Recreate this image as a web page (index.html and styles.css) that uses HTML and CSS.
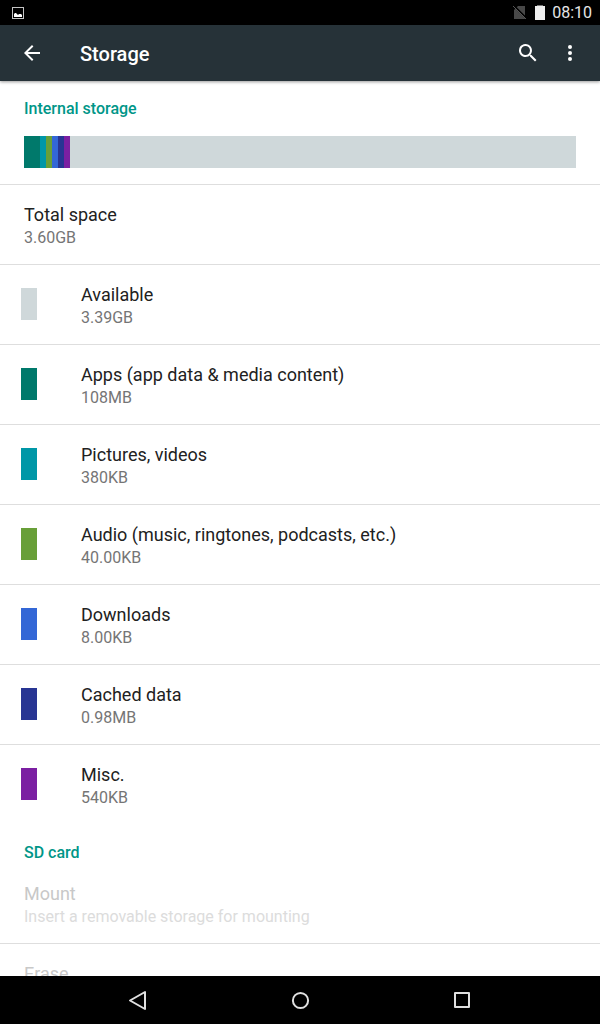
FILE: index.html
```html
<!DOCTYPE html>
<html lang="en">

<head>
    <title>Storage</title>
    <meta charset="UTF-8">
    <meta name="viewport" content="width=device-width, initial-scale=1.0">
    <link rel="stylesheet" href="styles.css">
</head>

<body>
    <div class="statusBar">
        <svg class="statusBar-picture" width="12" height="12" viewBox="0 0 12 12" aria-hidden="true">
            <rect x=".5" y=".5" width="11" height="11" fill="none" stroke="#c4c4c4" />
            <path d="M2 10V7l1-1h1l1 1 1 1 1-1h2l1 1v2z" fill="#fff" />
        </svg>
        <div class="statusBar-right">
            <svg width="15" height="14" viewBox="0 0 15 14" aria-hidden="true">
                <path d="M5 0h7v13H1V4z" fill="#484848" />
                <path d="M1 0l13 13" stroke="#000" stroke-width="2" />
                <path d="M0 0l13 13" stroke="#555" stroke-width="1" />
            </svg>
            <svg width="10" height="15" viewBox="0 0 10 15" aria-hidden="true">
                <path d="M0 1h10v14H0z" fill="#eee" />
                <path d="M2 0h6v1H2z" fill="#777" />
            </svg>
            <time datetime="08:10">08:10</time>
        </div>
    </div>
    <header class="appBar">
        <button class="iconButton" aria-label="Back">
            <svg width="24" height="24" viewBox="0 0 24 24">
                <path d="M20 11H7.800l5.600-5.600L12 4l-8 8 8 8 1.400-1.400L7.800 13H20z" fill="#fff" />
            </svg>
        </button>
        <h1 class="appBar-title">Storage</h1>
        <button class="iconButton" aria-label="Search">
            <svg width="24" height="24" viewBox="0 0 24 24">
                <path d="M15.500 14h-.8l-.3-.3a6.500 6.500 0 1 0-.7.7l.3.3v.8l5 5 1.500-1.500zm-6 0a4.500 4.500 0 1 1 0-9 4.500 4.500 0 0 1 0 9z" fill="#fff" />
            </svg>
        </button>
        <button class="iconButton iconButton-narrow" aria-label="More options">
            <svg width="24" height="24" viewBox="0 0 24 24" fill="#fff">
                <circle cx="12" cy="6" r="2" />
                <circle cx="12" cy="12" r="2" />
                <circle cx="12" cy="18" r="2" />
            </svg>
        </button>
    </header>
    <main class="content">
        <section>
            <h2 class="category">Internal storage</h2>
            <div class="usage">
                <div class="usage-bar">
                    <span class="usage-part apps"></span>
                    <span class="usage-part pictures"></span>
                    <span class="usage-part audio"></span>
                    <span class="usage-part downloads"></span>
                    <span class="usage-part cached"></span>
                    <span class="usage-part misc"></span>
                </div>
            </div>
            <ul class="items">
                <li class="item">
                    <div>
                        <h3 class="item-title">Total space</h3>
                        <p class="item-summary">3.60GB</p>
                    </div>
                </li>
                <li class="item item-colored">
                    <span class="swatch available"></span>
                    <div>
                        <h3 class="item-title">Available</h3>
                        <p class="item-summary">3.39GB</p>
                    </div>
                </li>
                <li class="item item-colored">
                    <span class="swatch apps"></span>
                    <div>
                        <h3 class="item-title">Apps (app data &amp; media content)</h3>
                        <p class="item-summary">108MB</p>
                    </div>
                </li>
                <li class="item item-colored">
                    <span class="swatch pictures"></span>
                    <div>
                        <h3 class="item-title">Pictures, videos</h3>
                        <p class="item-summary">380KB</p>
                    </div>
                </li>
                <li class="item item-colored">
                    <span class="swatch audio"></span>
                    <div>
                        <h3 class="item-title">Audio (music, ringtones, podcasts, etc.)</h3>
                        <p class="item-summary">40.00KB</p>
                    </div>
                </li>
                <li class="item item-colored">
                    <span class="swatch downloads"></span>
                    <div>
                        <h3 class="item-title">Downloads</h3>
                        <p class="item-summary">8.00KB</p>
                    </div>
                </li>
                <li class="item item-colored">
                    <span class="swatch cached"></span>
                    <div>
                        <h3 class="item-title">Cached data</h3>
                        <p class="item-summary">0.98MB</p>
                    </div>
                </li>
                <li class="item item-colored">
                    <span class="swatch misc"></span>
                    <div>
                        <h3 class="item-title">Misc.</h3>
                        <p class="item-summary">540KB</p>
                    </div>
                </li>
            </ul>
        </section>
        <section>
            <h2 class="category">SD card</h2>
            <button class="item item-action" disabled>
                <span class="item-title">Mount</span>
                <span class="item-summary">Insert a removable storage for mounting</span>
            </button>
            <button class="item item-action" disabled>
                <span class="item-title">Erase</span>
            </button>
        </section>
    </main>
    <nav class="navBar">
        <button class="navButton" aria-label="Back">
            <svg width="24" height="24" viewBox="0 0 24 24">
                <path d="M19 4v17L4 12.500z" />
            </svg>
        </button>
        <button class="navButton" aria-label="Home">
            <svg width="24" height="24" viewBox="0 0 24 24">
                <circle cx="12.500" cy="12.500" r="7.600" />
            </svg>
        </button>
        <button class="navButton" aria-label="Recent apps">
            <svg width="24" height="24" viewBox="0 0 24 24">
                <rect x="5" y="5" width="14" height="14" />
            </svg>
        </button>
    </nav>
</body>

</html>
```

FILE: styles.css
```css
html,
button {
    font-family: Roboto, 'Noto Sans', sans-serif;
    color: #212121;
}

body {
    background: #fff;
    margin: 0;
    display: flex;
    flex-direction: column;
    height: 100vh;
    overflow: hidden;
}

h1,
h2,
h3,
p,
ul {
    margin: 0;
    padding: 0;
    font-weight: 400;
}

button {
    border: 0;
    margin: 0;
    padding: 0;
    background: transparent;
}

svg {
    display: block;
}

.statusBar {
    flex: none;
    height: 25px;
    padding: 0 8px 0 12px;
    box-sizing: border-box;
    display: flex;
    align-items: center;
    justify-content: space-between;
    background: #000;
    color: #e6e6e6;
    font-size: 16px;
    line-height: 25px;
}

.statusBar-right {
    display: flex;
    align-items: center;
    gap: 7px;
}

.appBar {
    flex: none;
    height: 56px;
    padding: 0 12px 0 8px;
    box-sizing: border-box;
    display: flex;
    align-items: center;
    background: #263238;
    box-shadow: 0 1px 3px rgba(0, 0, 0, .4);
    z-index: 1;
}

.appBar-title {
    flex: 1;
    padding: 2px 0 0 24px;
    color: #fff;
    font-size: 20px;
    font-weight: 500;
    line-height: 24px;
}

.iconButton {
    width: 48px;
    height: 56px;
    display: flex;
    align-items: center;
    justify-content: center;
}

.iconButton-narrow {
    width: 36px;
}

.content {
    flex: 1;
    min-height: 0;
    overflow: hidden;
}

.category {
    padding: 17px 24px 0;
    color: #009688;
    font-size: 16px;
    font-weight: 500;
    line-height: 22px;
}

.usage {
    padding: 16px 24px;
    border-bottom: 1px solid #dedede;
}

.usage-bar {
    display: flex;
    height: 32px;
    background: #cfd8da;
}

.usage-part {
    width: 6px;
}

.usage-part.apps {
    width: 16px;
}

.items {
    list-style: none;
}

.item {
    display: flex;
    padding: 18px 24px 15px;
    border-bottom: 1px solid #dedede;
}

.items .item:last-child {
    border-bottom-color: transparent;
}

.item-colored {
    padding-left: 21px;
    gap: 44px;
}

.item-action {
    width: 100%;
    flex-direction: column;
    text-align: left;
}

.item-title {
    font-size: 18px;
    line-height: 24px;
}

.item-summary {
    color: #757575;
    font-size: 16px;
    line-height: 22px;
}

.item-action:disabled .item-title {
    color: #c8c8c8;
}

.item-action:disabled .item-summary {
    color: #dcdcdc;
}

.swatch {
    flex: none;
    width: 16px;
    height: 32px;
    margin-top: 5px;
}

.available {
    background: #cfd8da;
}

.apps {
    background: #00796b;
}

.pictures {
    background: #0097a7;
}

.audio {
    background: #689f38;
}

.downloads {
    background: #3367d6;
}

.cached {
    background: #283593;
}

.misc {
    background: #7b1fa2;
}

.navBar {
    flex: none;
    height: 48px;
    display: flex;
    justify-content: center;
    background: #000;
}

.navButton {
    width: 27%;
    display: flex;
    align-items: center;
    justify-content: center;
}

.navButton svg {
    fill: none;
    stroke: #e0e0e0;
    stroke-width: 2;
    stroke-linejoin: round;
}
```
